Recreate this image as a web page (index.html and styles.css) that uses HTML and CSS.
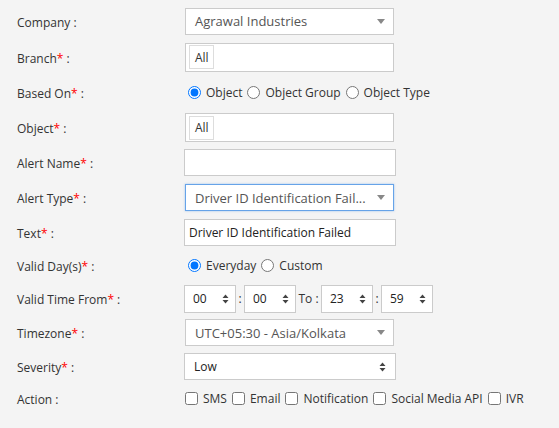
FILE: index.html
```html
<!DOCTYPE html>
<html>
<head>
<meta charset="utf-8">
<link rel="stylesheet" href="styles.css">
</head>
<body>
<div class="form">
  <div class="row h36">
    <div class="label">Company :</div>
    <div class="field">
      <div class="select w209"><span class="val">Agrawal Industries</span><span class="caret"></span></div>
    </div>
  </div>
  <div class="row h36">
    <div class="label">Branch<span class="req">*</span> :</div>
    <div class="field">
      <div class="multi w209"><span class="chip">All</span></div>
    </div>
  </div>
  <div class="row h35">
    <div class="label">Based On<span class="req">*</span> :</div>
    <div class="field opts">
      <label class="opt"><input type="radio" name="b" checked>Object</label>
      <label class="opt"><input type="radio" name="b">Object Group</label>
      <label class="opt"><input type="radio" name="b">Object Type</label>
    </div>
  </div>
  <div class="row h35">
    <div class="label">Object<span class="req">*</span> :</div>
    <div class="field">
      <div class="multi w209"><span class="chip">All</span></div>
    </div>
  </div>
  <div class="row h35">
    <div class="label">Alert Name<span class="req">*</span> :</div>
    <div class="field field-in">
      <div class="input w212"></div>
    </div>
  </div>
  <div class="row h35">
    <div class="label">Alert Type<span class="req">*</span> :</div>
    <div class="field">
      <div class="select w209 focus"><span class="val">Driver ID Identification Fail...</span><span class="caret"></span></div>
    </div>
  </div>
  <div class="row h34">
    <div class="label">Text<span class="req">*</span> :</div>
    <div class="field field-in">
      <div class="input w212 dark">Driver ID Identification Failed</div>
    </div>
  </div>
  <div class="row h33">
    <div class="label">Valid Day(s)<span class="req">*</span> :</div>
    <div class="field opts">
      <label class="opt"><input type="radio" name="d" checked>Everyday</label>
      <label class="opt"><input type="radio" name="d">Custom</label>
    </div>
  </div>
  <div class="row h33">
    <div class="label">Valid Time From<span class="req">*</span> :</div>
    <div class="field field-in time">
      <div class="spin"><span>00</span><svg width="7" height="10" viewBox="0 0 7 10"><path d="M3.5 0.5 L6.5 4 L0.5 4 Z M3.5 9.5 L6.5 6 L0.5 6 Z" fill="#444"/></svg></div>
      <span class="sep">:</span>
      <div class="spin"><span>00</span><svg width="7" height="10" viewBox="0 0 7 10"><path d="M3.5 0.5 L6.5 4 L0.5 4 Z M3.5 9.5 L6.5 6 L0.5 6 Z" fill="#444"/></svg></div>
      <span class="to">To :</span>
      <div class="spin"><span>23</span><svg width="7" height="10" viewBox="0 0 7 10"><path d="M3.5 0.5 L6.5 4 L0.5 4 Z M3.5 9.5 L6.5 6 L0.5 6 Z" fill="#444"/></svg></div>
      <span class="sep">:</span>
      <div class="spin"><span>59</span><svg width="7" height="10" viewBox="0 0 7 10"><path d="M3.5 0.5 L6.5 4 L0.5 4 Z M3.5 9.5 L6.5 6 L0.5 6 Z" fill="#444"/></svg></div>
    </div>
  </div>
  <div class="row h35">
    <div class="label">Timezone<span class="req">*</span> :</div>
    <div class="field">
      <div class="select w209"><span class="val">UTC+05:30 - Asia/Kolkata</span><span class="caret"></span></div>
    </div>
  </div>
  <div class="row h33">
    <div class="label">Severity<span class="req">*</span> :</div>
    <div class="field field-in">
      <div class="input w212 sev dark"><span>Low</span><svg width="7" height="10" viewBox="0 0 7 10"><path d="M3.5 0.5 L6.5 4 L0.5 4 Z M3.5 9.5 L6.5 6 L0.5 6 Z" fill="#444"/></svg></div>
    </div>
  </div>
  <div class="row h31">
    <div class="label">Action :</div>
    <div class="field field-in opts checks">
      <label class="opt"><input type="checkbox">SMS</label>
      <label class="opt"><input type="checkbox">Email</label>
      <label class="opt"><input type="checkbox">Notification</label>
      <label class="opt"><input type="checkbox">Social Media API</label>
      <label class="opt"><input type="checkbox">IVR</label>
    </div>
  </div>
</div>
</body>
</html>
```
FILE: styles.css
```css
html, body {
  margin: 0;
  padding: 0;
  background: #f4f4f4;
}
body {
  font-family: "Open Sans", "Liberation Sans", sans-serif;
  font-size: 12px;
  color: #333;
}
.form {
  padding: 3px 0 0 17px;
  display: flex;
  flex-direction: column;
}
.row {
  display: flex;
  align-items: center;
}
.h36 { height: 36px; }
.h35 { height: 35px; }
.h34 { height: 34px; }
.h33 { height: 33px; }
.h31 { height: 31px; }
.label {
  width: 168px;
  flex: none;
  color: #333;
  padding-top: 2px;
}
.req { color: #f00; }
.field {
  display: flex;
  align-items: center;
}
.field-in { margin-left: -1px; }
.w209 { width: 209px; }
.w212 { width: 212px; }
.select {
  box-sizing: border-box;
  height: 27px;
  background: #fff;
  border: 1px solid #cbcbcb;
  display: flex;
  align-items: center;
  padding: 0 8px 0 9px;
  font-size: 13px;
  color: #555;
}
.select .val {
  flex: 1;
  white-space: nowrap;
  margin-right: 10px;
}
.select.focus {
  border-color: #66a3e8;
  box-shadow: 0 0 2px rgba(102, 163, 232, 0.6);
}
.caret {
  width: 0;
  height: 0;
  border-left: 4px solid transparent;
  border-right: 4px solid transparent;
  border-top: 5px solid #888;
  flex: none;
}
.multi {
  box-sizing: border-box;
  height: 29px;
  background: #fff;
  border: 1px solid #cbcbcb;
  display: flex;
  align-items: center;
  padding: 0 3px;
}
.chip {
  box-sizing: border-box;
  height: 24px;
  width: 25px;
  border: 1px solid #ddd;
  display: flex;
  align-items: center;
  padding-left: 5px;
  font-size: 12px;
  color: #333;
}
.input {
  box-sizing: border-box;
  height: 27px;
  background: #fff;
  border: 1px solid #cbcbcb;
  display: flex;
  align-items: center;
  padding: 0 4px;
  font-size: 12px;
  color: #555;
}
.input.dark { color: #222; }
.sev {
  padding: 0 9px 0 9px;
  justify-content: space-between;
}
.opts {
  gap: 2px;
}
.opt {
  display: flex;
  align-items: center;
  font-size: 12px;
  color: #333;
  white-space: nowrap;
}
.opt input {
  margin: 0 5px 0 3px;
  width: 13px;
  height: 13px;
}
.checks {
  gap: 4px;
}
.checks .opt input {
  margin: 0 5px 0 1px;
}
.time .spin {
  box-sizing: border-box;
  width: 52px;
  height: 28px;
  background: #fff;
  border: 1px solid #cbcbcb;
  display: flex;
  align-items: center;
  justify-content: space-between;
  padding: 0 6px 0 8px;
  font-size: 12px;
  color: #222;
}
.time .sep {
  width: 8px;
  text-align: center;
}
.time .to {
  width: 25px;
  text-align: center;
  white-space: nowrap;
}
```
